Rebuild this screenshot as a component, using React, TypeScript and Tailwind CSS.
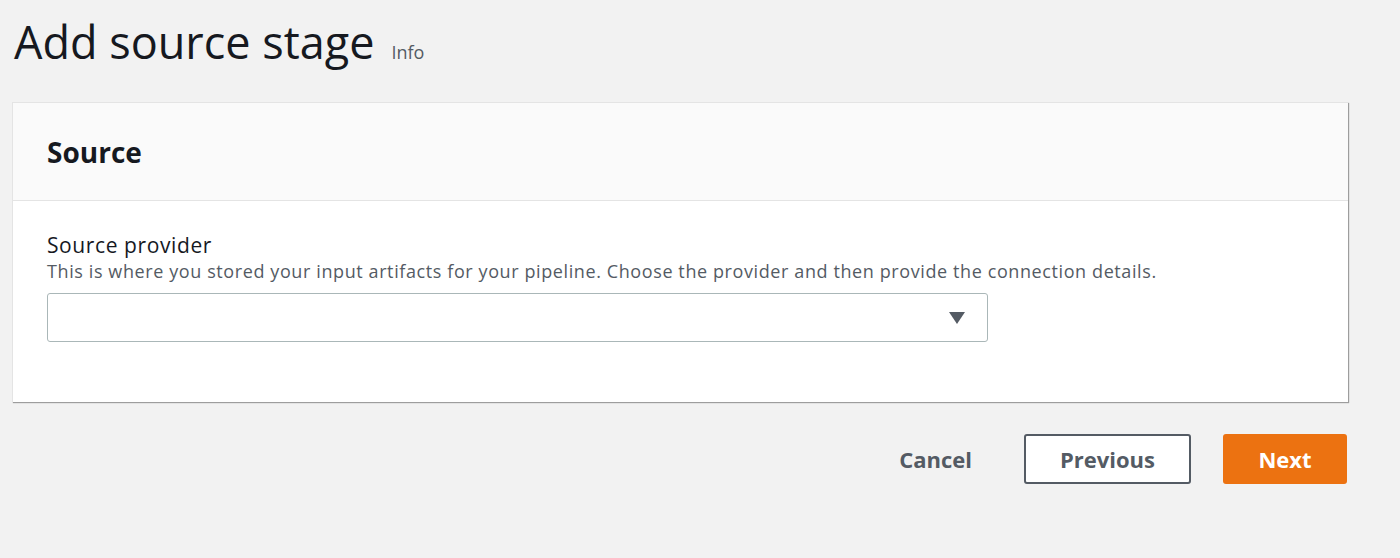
export default function App() {
  return (
    <div
      className="min-h-[558px] w-[1400px] bg-[#f2f2f2] text-[#16191f]"
      style={{ fontFamily: '"Open Sans", "Noto Sans", Arial, sans-serif' }}
    >
      <div className="pl-[12px] w-[1348px]">
        <div className="flex items-baseline gap-[17px] pt-[14px] pl-[2px] h-[86px]">
          <h1 className="text-[45px] leading-[56px] font-normal">Add source stage</h1>
          <span className="text-[18px] leading-[24px] text-[#545b64]">Info</span>
        </div>

        <div className="mt-[16px] bg-white border-l border-t border-[#e4e4e4] shadow-[1px_1px_1px_0_rgba(0,0,0,0.35)]">
          <div className="h-[98px] bg-[#fafafa] border-b border-[#e4e4e4] flex items-center px-[34px]">
            <h2 className="text-[28px] font-bold leading-[36px]">Source</h2>
          </div>
          <div className="px-[34px] pt-[30px] pb-[60px]">
            <div className="text-[21px] leading-[28px] tracking-[0.6px]">Source provider</div>
            <div className="text-[18px] leading-[24px] tracking-[0.6px] text-[#545b64] whitespace-nowrap">
              This is where you stored your input artifacts for your pipeline. Choose the provider and then provide the connection details.
            </div>
            <div className="mt-[10px] w-[941px] h-[49px] border border-[#aab7b8] rounded-[3px] bg-white flex items-center justify-end pr-[22px]">
              <svg width="16" height="12" viewBox="0 0 16 12">
                <path d="M0 0 H16 L8 12 Z" fill="#545b64" />
              </svg>
            </div>
          </div>
        </div>

        <div className="flex items-center justify-end mt-[32px] gap-[32px] pr-[1px]">
          <button className="text-[22px] font-bold text-[#545b64] px-[20px] h-[50px]">Cancel</button>
          <button className="w-[167px] h-[50px] border-2 border-[#545b64] rounded-[3px] bg-white text-[22px] font-bold text-[#545b64]">
            Previous
          </button>
          <button className="w-[124px] h-[50px] rounded-[3px] bg-[#ec7211] text-[22px] font-bold text-white">
            Next
          </button>
        </div>
      </div>
    </div>
  );
}
